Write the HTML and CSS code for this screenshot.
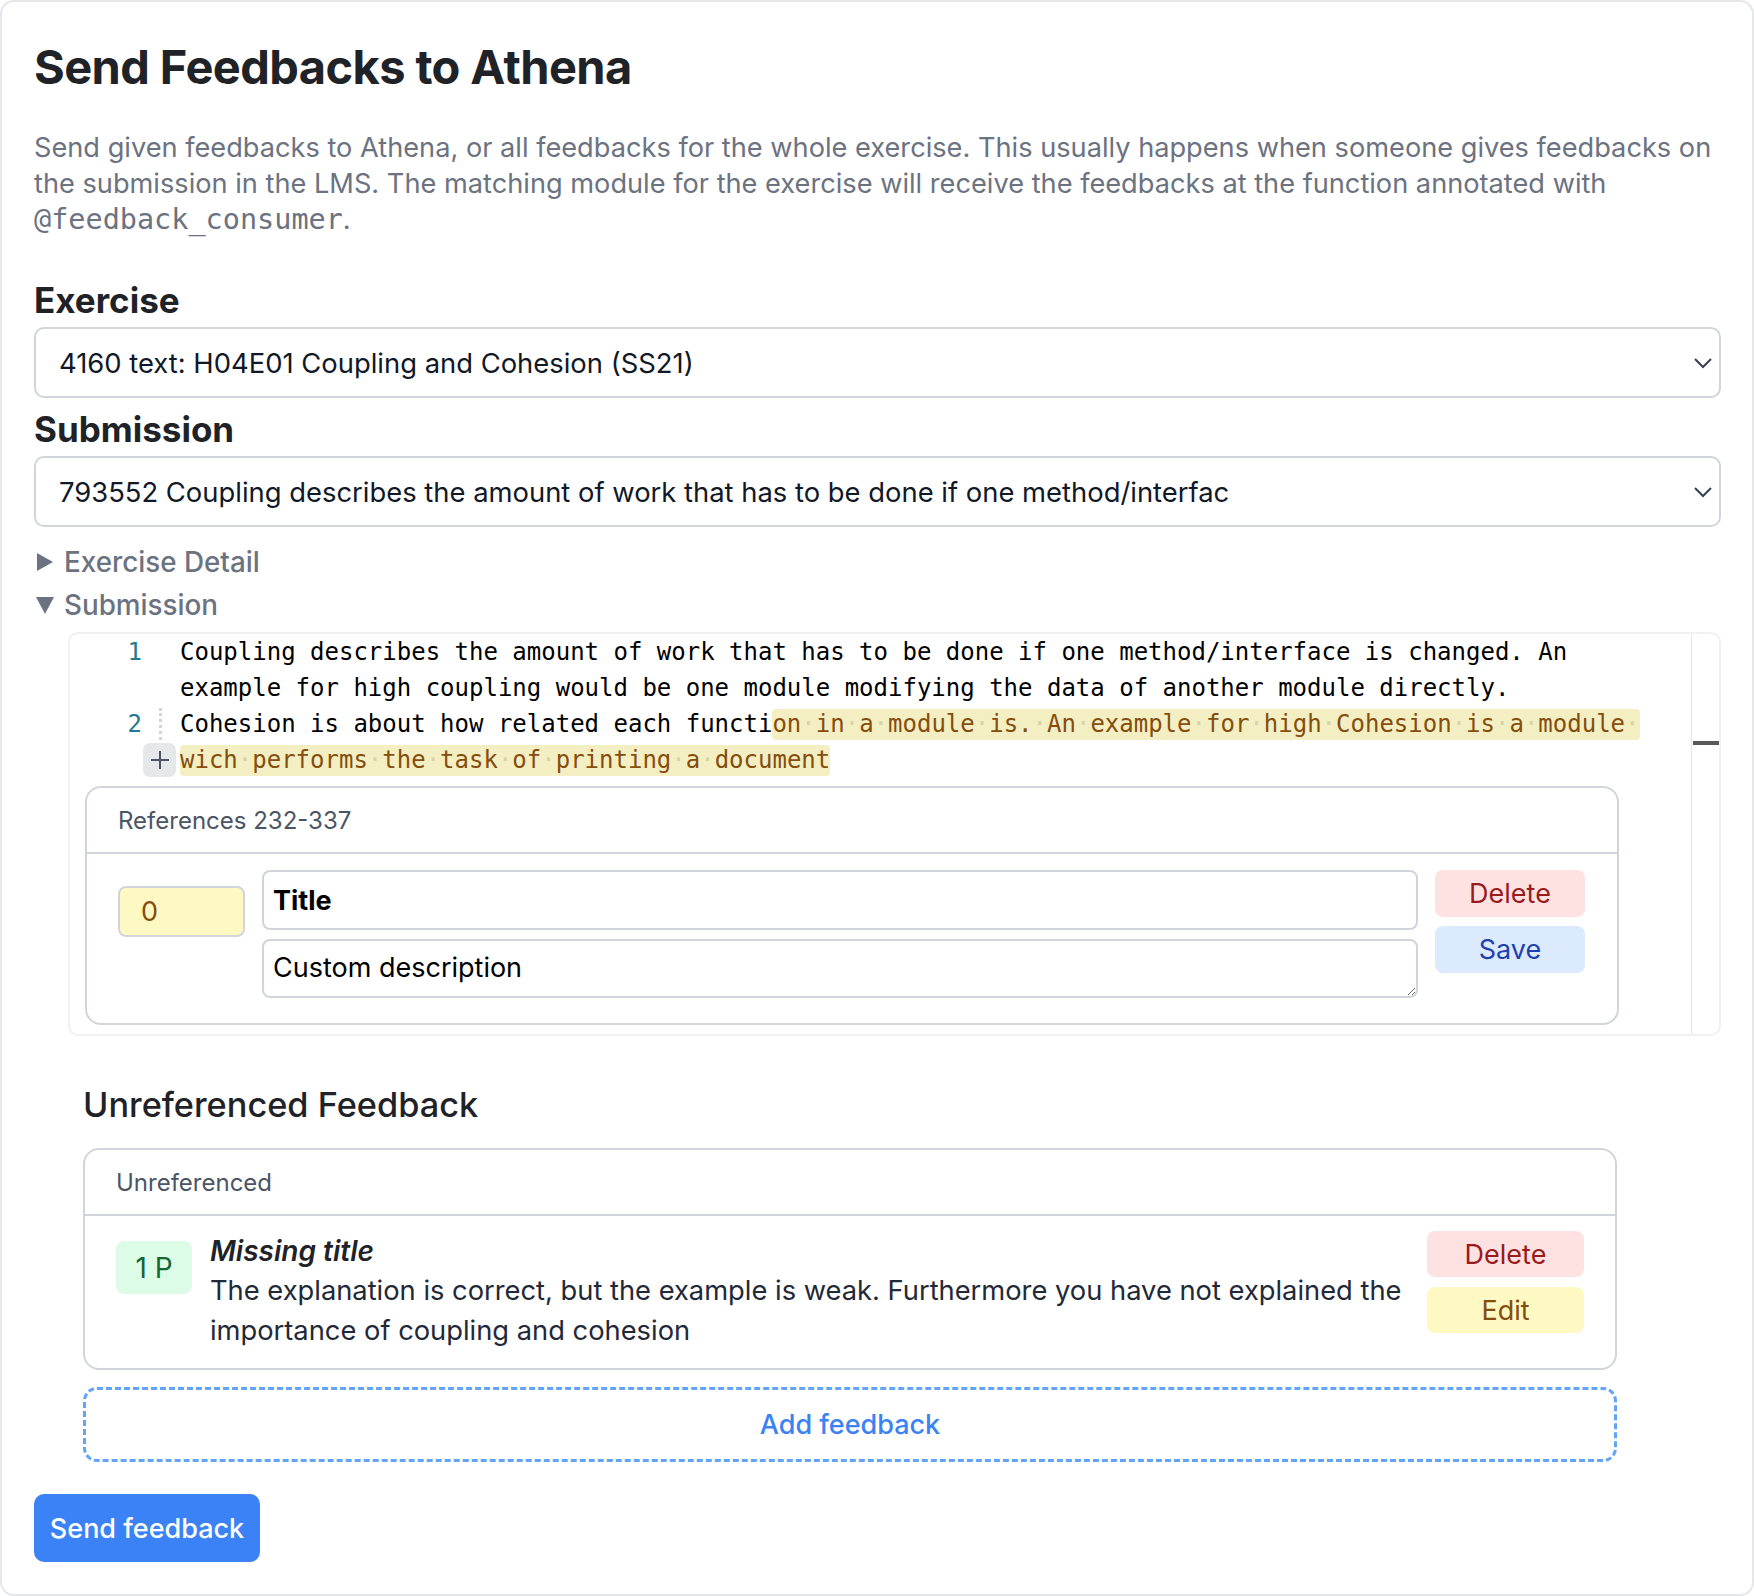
FILE: index.html
```html
<!DOCTYPE html>
<html>
<head>
<meta charset="utf-8">
<title>Send Feedbacks to Athena</title>
<link rel="stylesheet" href="styles.css">
</head>
<body>
<div class="card">
  <h1 class="title">Send Feedbacks to Athena</h1>
  <p class="desc">Send given feedbacks to Athena, or all feedbacks for the whole exercise. This usually happens when someone gives feedbacks on the submission in the LMS. The matching module for the exercise will receive the feedbacks at the function annotated with <code>@feedback_consumer</code>.</p>

  <h2 class="label">Exercise</h2>
  <div class="select">
    <span>4160 text: H04E01 Coupling and Cohesion (SS21)</span>
    <svg class="chev" width="20" height="12" viewBox="0 0 20 12"><path d="M2 2 L10 10 L18 2" fill="none" stroke="#374151" stroke-width="2"/></svg>
  </div>

  <h2 class="label label-sub">Submission</h2>
  <div class="select">
    <span>793552 Coupling describes the amount of work that has to be done if one method/interfac</span>
    <svg class="chev" width="20" height="12" viewBox="0 0 20 12"><path d="M2 2 L10 10 L18 2" fill="none" stroke="#374151" stroke-width="2"/></svg>
  </div>

  <div class="toggle toggle-first">
    <svg class="tri" width="18" height="20" viewBox="0 0 18 20"><polygon points="1,1 17,10 1,19" fill="#6b7280"/></svg>
    <span>Exercise Detail</span>
  </div>
  <div class="toggle">
    <svg class="tri" width="18" height="20" viewBox="0 0 18 20"><polygon points="0,2 18,2 9,19" fill="#6b7280"/></svg>
    <span>Submission</span>
  </div>

  <div class="editor">
    <div class="editor-main">
      <div class="line"><span class="ln">1</span><span class="code">Coupling describes the amount of work that has to be done if one method/interface is changed. An</span></div>
      <div class="line"><span class="ln"></span><span class="code">example for high coupling would be one module modifying the data of another module directly.</span></div>
      <div class="line"><span class="ln">2<i class="dots"></i></span><span class="code">Cohesion is about how related each functi<span class="hl">on<b class="ws">·</b>in<b class="ws">·</b>a<b class="ws">·</b>module<b class="ws">·</b>is.<b class="ws">·</b>An<b class="ws">·</b>example<b class="ws">·</b>for<b class="ws">·</b>high<b class="ws">·</b>Cohesion<b class="ws">·</b>is<b class="ws">·</b>a<b class="ws">·</b>module<b class="ws">·</b></span></span></div>
      <div class="line"><span class="ln"><span class="plus"><svg width="22" height="22" viewBox="0 0 22 22"><path d="M11 2 V20 M2 11 H20" stroke="#4b5563" stroke-width="2"/></svg></span></span><span class="code"><span class="hl">wich<b class="ws">·</b>performs<b class="ws">·</b>the<b class="ws">·</b>task<b class="ws">·</b>of<b class="ws">·</b>printing<b class="ws">·</b>a<b class="ws">·</b>document</span></span></div>

      <div class="fb-box zone">
        <div class="fb-head">References 232-337</div>
        <div class="zone-body">
          <input class="score" type="text" value="0">
          <div class="fields">
            <input class="f-title" type="text" value="Title">
            <textarea class="f-desc">Custom description</textarea>
          </div>
          <div class="btns">
            <button class="btn btn-del">Delete</button>
            <button class="btn btn-save">Save</button>
          </div>
        </div>
      </div>
    </div>
    <div class="scrollbar"><div class="marker"></div></div>
  </div>

  <section class="unref">
    <h3 class="unref-title">Unreferenced Feedback</h3>
    <div class="fb-box unref-box">
      <div class="fb-head">Unreferenced</div>
      <div class="unref-body">
        <div class="badge">1 P</div>
        <div class="fb-text">
          <div class="fb-name">Missing title</div>
          <div class="fb-desc">The explanation is correct, but the example is weak. Furthermore you have not explained the importance of coupling and cohesion</div>
        </div>
        <div class="btns btns-unref">
          <button class="btn btn-del">Delete</button>
          <button class="btn btn-edit">Edit</button>
        </div>
      </div>
    </div>
    <button class="add">Add feedback</button>
  </section>

  <button class="send">Send feedback</button>
</div>
</body>
</html>
```

FILE: styles.css
```css
* { box-sizing: border-box; }
html, body { margin: 0; padding: 0; background: #ffffff; }
body { font-family: Inter, "Noto Sans", "Liberation Sans", sans-serif; color: #1f2937; }

.card {
  width: 1754px;
  height: 1596px;
  border: 2px solid #e5e7eb;
  border-radius: 14px;
  padding: 36px 32px 0 32px;
  overflow: hidden;
}

.title {
  margin: 0;
  font-size: 47px;
  line-height: 58px;
  font-weight: 700;
  color: #1f2328;
  letter-spacing: -0.6px;
}

.desc {
  margin: 34px 0 0;
  font-size: 27.2px;
  line-height: 36px;
  color: #6b7280;
}
.desc code {
  font-family: "DejaVu Sans Mono", "Liberation Mono", monospace;
  font-size: 28.5px;
}

.label {
  margin: 40px 0 0;
  font-size: 35px;
  line-height: 44px;
  font-weight: 700;
  color: #1f2328;
}
.label-sub { margin-top: 9px; }

.select {
  margin-top: 5px;
  height: 71px;
  margin-right: -1px;
  border: 2px solid #d1d5db;
  border-radius: 10px;
  padding: 0 6px 0 23px;
  display: flex;
  align-items: center;
  justify-content: space-between;
  font-size: 27.4px;
  color: #111827;
}
.chev { flex: none; }

.toggle {
  display: flex;
  align-items: center;
  gap: 10px;
  height: 40px;
  margin-top: 3px;
  padding-left: 2px;
  font-size: 27.8px;
  font-weight: 500;
  color: #6b7280;
}
.toggle-first { margin-top: 15px; }
.tri { flex: none; }

.editor {
  margin: 7px -1px 0 34px;
  height: 404px;
  border: 2px solid #f0f1f3;
  border-radius: 10px;
  display: flex;
  overflow: hidden;
}
.editor-main { flex: 1; min-width: 0; }
.line {
  display: flex;
  height: 36px;
  font-family: "DejaVu Sans Mono", "Liberation Mono", monospace;
  font-size: 24px;
  line-height: 36px;
  color: #000;
}
.ln {
  flex: none;
  width: 110px;
  padding-right: 38px;
  text-align: right;
  color: #237893;
  position: relative;
}
.dots {
  position: absolute;
  left: 89px;
  top: 2px;
  height: 32px;
  border-left: 3px dotted #d1d5db;
}
.plus {
  position: absolute;
  left: 73px;
  top: 1px;
  width: 33px;
  height: 34px;
  border-radius: 7px;
  background: #e5e7eb;
  display: flex;
  align-items: center;
  justify-content: center;
}
.plus svg { display: block; }
.code { white-space: pre; }
.hl {
  background: #f3efc3;
  color: #854d0e;
  border-radius: 4px;
  padding: 1px 0 2px;
}
.ws { font-weight: 400; color: #d8d2a8; }

.fb-box {
  border: 2px solid #d1d5db;
  border-radius: 16px;
  background: #fff;
}
.fb-head {
  height: 66px;
  padding-left: 31px;
  display: flex;
  align-items: center;
  font-size: 24px;
  color: #4b5563;
  border-bottom: 2px solid #d1d5db;
}

.zone {
  margin: 8px 0 0 15px;
  width: 1534px;
}
.zone-body {
  display: flex;
  gap: 17px;
  padding: 16px 32px 25px 31px;
}
.score {
  flex: none;
  width: 127px;
  height: 51px;
  margin-top: 16px;
  background: #fef9c3;
  border: 2px solid #d1d5db;
  border-radius: 8px;
  padding: 0 0 0 21px;
  font-family: inherit;
  font-size: 27px;
  color: #854d0e;
  outline: none;
}
.fields {
  flex: 1;
  display: flex;
  flex-direction: column;
  gap: 9px;
}
.f-title, .f-desc {
  width: 100%;
  border: 2px solid #d1d5db;
  border-radius: 8px;
  padding: 0 0 0 9px;
  font-family: inherit;
  font-size: 27px;
  color: #000;
  outline: none;
  background: #fff;
}
.f-title { height: 60px; font-weight: 700; }
.f-desc { height: 59px; padding-top: 9px; line-height: 36px; resize: vertical; display: block; }

.btns {
  flex: none;
  width: 150px;
  display: flex;
  flex-direction: column;
  gap: 9px;
}
.btn {
  height: 47px;
  border: 0;
  border-radius: 8px;
  font-family: inherit;
  font-size: 27px;
  padding: 0;
}
.btn-del { background: #fee2e2; color: #991b1b; }
.btn-save { background: #dbeafe; color: #1e40af; }
.btn-edit { background: #fef9c3; color: #854d0e; }

.scrollbar {
  flex: none;
  width: 28px;
  border-left: 1px solid #e5e7eb;
  padding-top: 107px;
}
.marker { height: 4px; background: #5a5a5a; margin-left: 1px; }

.unref {
  margin: 0 0 0 49px;
  width: 1534px;
}
.unref-title {
  margin: 49px 0 0;
  font-size: 34.3px;
  line-height: 40px;
  font-weight: 500;
  color: #1f2328;
}
.unref-box { margin-top: 23px; }
.unref-body {
  display: flex;
  gap: 12px;
  padding: 15px 31px 17px 31px;
}
.badge {
  flex: none;
  width: 76px;
  height: 53px;
  margin-top: 10px;
  margin-right: 6px;
  border-radius: 8px;
  background: #dcfce7;
  color: #166534;
  font-size: 28px;
  display: flex;
  align-items: center;
  justify-content: center;
}
.fb-text { flex: 1; min-width: 0; }
.fb-name {
  font-size: 28px;
  line-height: 40px;
  font-style: italic;
  font-weight: 600;
  color: #1f2328;
}
.fb-desc {
  font-size: 27.3px;
  line-height: 40px;
  color: #1f2937;
}
.btns-unref { width: 157px; gap: 10px; margin-left: 5px; }
.btns-unref .btn { height: 46px; }

.add {
  display: block;
  margin-top: 17px;
  width: 100%;
  height: 75px;
  border: 3px dashed #60a5fa;
  border-radius: 14px;
  background: #fff;
  color: #3b82f6;
  font-family: inherit;
  font-size: 27px;
  font-weight: 500;
}

.send {
  display: block;
  margin-top: 32px;
  width: 226px;
  height: 68px;
  border: 0;
  border-radius: 10px;
  background: #3b82f6;
  color: #fff;
  font-family: inherit;
  font-size: 27px;
  font-weight: 500;
}
```
